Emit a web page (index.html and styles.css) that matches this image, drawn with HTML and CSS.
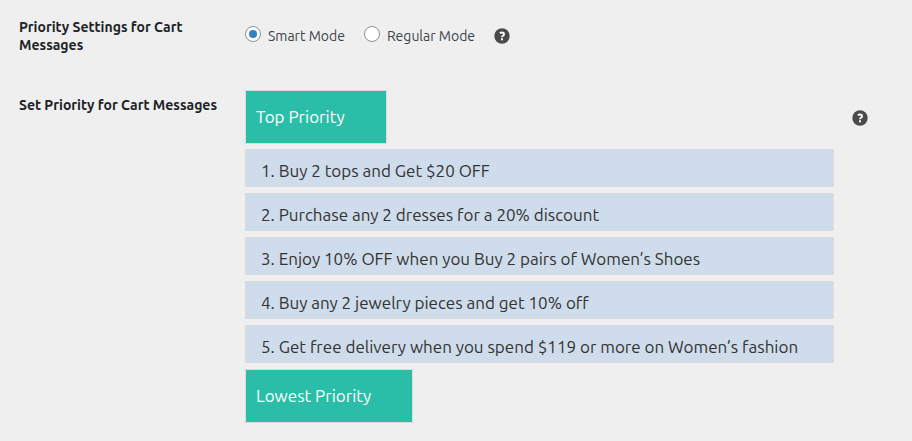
FILE: index.html
```html
<!DOCTYPE html>
<html lang="en">
<head>
<meta charset="utf-8">
<meta name="viewport" content="width=device-width, initial-scale=1">
<title>Cart Messages</title>
<link rel="stylesheet" href="styles.css">
</head>
<body>
<form class="settings">
  <div class="row" role="radiogroup" aria-labelledby="mode-title">
    <h2 class="title" id="mode-title">Priority Settings for Cart Messages</h2>
    <div class="modes">
      <label class="mode"><input class="radio" type="radio" name="mode" value="smart" checked>Smart Mode</label>
      <label class="mode"><input class="radio" type="radio" name="mode" value="regular">Regular Mode</label>
      <button class="help" type="button" aria-label="Help"><svg viewBox="0 0 16 16"><circle cx="8" cy="8" r="7.7" fill="#4a4a4a"/><path d="M5.9 5.3Q7 4.4 8.2 4.5Q10.1 4.6 10 6.2Q10 7.1 9 7.8Q8 8.4 8 9.3" fill="none" stroke="#fff" stroke-width="1.9"/><rect x="7" y="10.3" width="2" height="2" fill="#fff"/></svg></button>
    </div>
  </div>
  <div class="row">
    <h2 class="title">Set Priority for Cart Messages</h2>
    <div class="priority">
      <div class="bound">Top Priority</div>
      <ol class="list">
        <li class="item">1. Buy 2 tops and Get $20 OFF</li>
        <li class="item">2. Purchase any 2 dresses for a 20% discount</li>
        <li class="item">3. Enjoy 10% OFF when you Buy 2 pairs of Women’s Shoes</li>
        <li class="item">4. Buy any 2 jewelry pieces and get 10% off</li>
        <li class="item">5. Get free delivery when you spend $119 or more on Women’s fashion</li>
      </ol>
      <div class="bound">Lowest Priority</div>
    </div>
    <button class="help help-list" type="button" aria-label="Help"><svg viewBox="0 0 16 16"><circle cx="8" cy="8" r="7.7" fill="#4a4a4a"/><path d="M5.9 5.3Q7 4.4 8.2 4.5Q10.1 4.6 10 6.2Q10 7.1 9 7.8Q8 8.4 8 9.3" fill="none" stroke="#fff" stroke-width="1.9"/><rect x="7" y="10.3" width="2" height="2" fill="#fff"/></svg></button>
  </div>
</form>
</body>
</html>
```
FILE: styles.css
```css
* {
  box-sizing: border-box;
}

body {
  margin: 0;
  background: #efefef;
  color: #3c434a;
  font-family: Ubuntu, "Noto Sans", sans-serif;
  font-size: 14px;
}

.settings {
  display: grid;
  gap: 36px;
  padding: 18px 44px 18px 19px;
}

.row {
  display: flex;
  align-items: flex-start;
}

.title {
  flex: none;
  width: 206px;
  margin: 0 20px 0 0;
  color: #1d2327;
  font-size: 14px;
  font-weight: 700;
  line-height: 18px;
}

.row + .row .title {
  padding-top: 6px;
}

.modes {
  display: flex;
  align-items: center;
  gap: 19px;
  padding-top: 7px;
}

.mode {
  display: flex;
  align-items: center;
  gap: 7px;
  line-height: 22px;
}

.radio {
  appearance: none;
  display: grid;
  place-items: center;
  width: 16px;
  height: 16px;
  margin: 0 0 4px;
  border: 1px solid #8c8f94;
  border-radius: 50%;
  background: #fff;
}

.radio:checked::before {
  content: "";
  width: 8px;
  height: 8px;
  border-radius: 50%;
  background: #3582c4;
}

.help {
  flex: none;
  width: 16px;
  height: 16px;
  padding: 0;
  border: 0;
  background: none;
}

.help svg {
  display: block;
}

.help-list {
  margin: 20px 0 0 18px;
}

.priority {
  display: flex;
  flex: 1;
  flex-direction: column;
  align-items: flex-start;
  min-width: 0;
  font-size: 17px;
  line-height: 20px;
}

.bound {
  padding: 16px 41px 16px 10px;
  border: 1px solid #dcdcde;
  background: #2abda7;
  color: #fff;
}

.list {
  display: grid;
  gap: 6px;
  width: 100%;
  margin: 5px 0 6px;
  padding: 0;
  list-style: none;
}

.item {
  padding: 11px 15px 5px;
  border: 1px solid #dcdcde;
  background: #cfdceb;
  color: #333;
}
```
